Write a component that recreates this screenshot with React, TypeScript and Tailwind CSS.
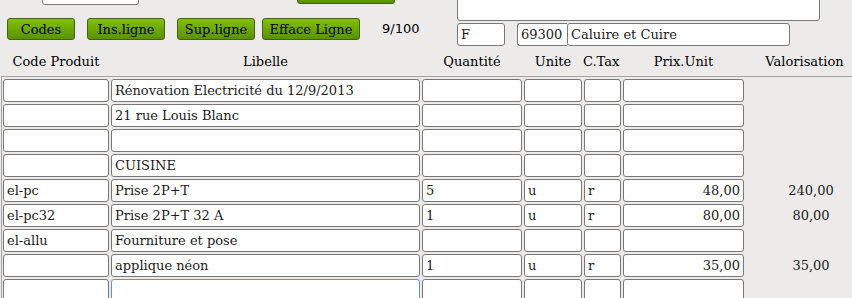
import React from 'react';

interface Ligne {
    code: string;
    libelle: string;
    qte: string;
    unite: string;
    tax: string;
    prix: string;
    valo: string;
    focus?: boolean;
}

const LIGNES: Ligne[] = [
    { code: '', libelle: 'Rénovation Electricité du 12/9/2013', qte: '', unite: '', tax: '', prix: '', valo: '' },
    { code: '', libelle: '21 rue Louis Blanc', qte: '', unite: '', tax: '', prix: '', valo: '' },
    { code: '', libelle: '', qte: '', unite: '', tax: '', prix: '', valo: '' },
    { code: '', libelle: 'CUISINE', qte: '', unite: '', tax: '', prix: '', valo: '' },
    { code: 'el-pc', libelle: 'Prise 2P+T', qte: '5', unite: 'u', tax: 'r', prix: '48,00', valo: '240,00' },
    { code: 'el-pc32', libelle: 'Prise 2P+T 32 A', qte: '1', unite: 'u', tax: 'r', prix: '80,00', valo: '80,00' },
    { code: 'el-allu', libelle: 'Fourniture et pose', qte: '', unite: '', tax: '', prix: '', valo: '' },
    { code: '', libelle: 'applique néon', qte: '1', unite: 'u', tax: 'r', prix: '35,00', valo: '35,00' },
    { code: '', libelle: '', qte: '', unite: '', tax: '', prix: '', valo: '', focus: true },
];

const Champ: React.FC<{ value: string; className?: string; focus?: boolean }> = ({ value, className = '', focus }) => (
    <input
        readOnly
        value={value}
        className={`h-[23px] shrink-0 rounded-[3px] border bg-white px-[3px] text-[13px] text-[#1c1c1c] outline-none font-['DejaVu_Serif',serif] ${
            focus ? 'border-[#5d93d6]' : 'border-[#787878]'
        } ${className}`}
    />
);

const Bouton: React.FC<{ label?: string; className?: string }> = ({ label, className = '' }) => (
    <button className={`h-[22px] shrink-0 rounded-[3px] border border-[#41611a] bg-linear-to-b from-[#82c000] to-[#5a9200] text-[13px] leading-none text-black ${className}`}>
        {label}
    </button>
);

export default function App() {
    return (
        <div className="h-[298px] w-[852px] overflow-hidden bg-[#ecebea] font-['DejaVu_Serif',serif] text-black">
            {/* Haut de page */}
            <div className="flex">
                <div className="w-[457px] shrink-0">
                    <div className="-mt-[18px] flex h-[24px] items-start">
                        <Champ value="" className="ml-[42px] w-[97px]" />
                        <Bouton className="ml-[158px] w-[98px]" />
                    </div>
                    <div className="mt-[12px] flex items-center">
                        <Bouton label="Codes" className="ml-[7px] w-[68px]" />
                        <Bouton label="Ins.ligne" className="ml-[12px] w-[78px]" />
                        <Bouton label="Sup.ligne" className="ml-[12px] w-[78px]" />
                        <Bouton label="Efface Ligne" className="ml-[7px] w-[98px]" />
                        <span className="ml-[22px] text-[13px] font-['DejaVu_Sans',sans-serif]">9/100</span>
                    </div>
                </div>
                <div className="flex-1">
                    <Champ value="" className="-mt-[20px] block h-[41px] w-[363px]" />
                    <div className="mt-[2px] flex">
                        <Champ value="F" className="w-[48px]" />
                        <Champ value="69300" className="ml-[12px] w-[50px] rounded-r-none border-r-0" />
                        <Champ value="Caluire et Cuire" className="w-[223px]" />
                    </div>
                </div>
            </div>

            {/* En-têtes */}
            <div className="mt-[5px] flex h-[21px] items-center pl-[2px] text-[13px]">
                <div className="w-[108px] shrink-0 text-center">Code Produit</div>
                <div className="w-[311px] shrink-0 text-center">Libelle</div>
                <div className="w-[102px] shrink-0 text-center">Quantité</div>
                <div className="w-[60px] shrink-0 text-center">Unite</div>
                <div className="w-[39px] shrink-0 overflow-hidden whitespace-nowrap text-left">C.Tax</div>
                <div className="w-[123px] shrink-0 text-center">Prix.Unit</div>
                <div className="w-[119px] shrink-0 text-center">Valorisation</div>
            </div>

            {/* Lignes */}
            <div className="ml-[1px] mt-[4px] flex flex-col gap-[2px] border-l border-t border-[#a3a3a3] pl-[1px] pt-[2px]">
                {LIGNES.map((l, i) => (
                    <div key={i} className="flex gap-[2px]">
                        <Champ value={l.code} className="w-[106px]" />
                        <Champ value={l.libelle} className="w-[309px]" focus={l.focus} />
                        <Champ value={l.qte} className="w-[100px]" />
                        <Champ value={l.unite} className="w-[58px]" />
                        <Champ value={l.tax} className="w-[37px]" />
                        <Champ value={l.prix} className="w-[121px] text-right" />
                        <div className="flex w-[119px] shrink-0 items-center justify-center pl-[11px] text-[13px] text-[#1c1c1c]">
                            {l.valo}
                        </div>
                    </div>
                ))}
            </div>
        </div>
    );
}
